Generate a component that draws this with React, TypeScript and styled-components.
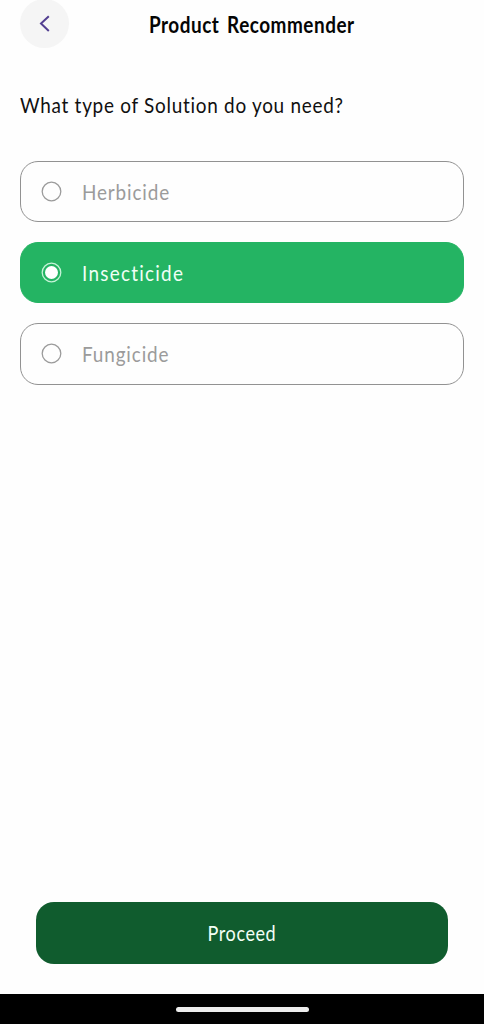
import React, { useState } from "react";
import styled, { createGlobalStyle } from "styled-components";

const GlobalStyle = createGlobalStyle`
  *, *::before, *::after { box-sizing: border-box; }
  body {
    margin: 0;
    background: #fefefe;
    font-family: Lato, "Open Sans", sans-serif;
    overflow: hidden;
  }
`;

const Screen = styled.div`
  display: flex;
  flex-direction: column;
  width: 484px;
  height: 1024px;
  background: #fefefe;
  overflow: hidden;
`;

const Header = styled.header`
  display: grid;
  grid-template-columns: 49px 1fr 49px;
  align-items: center;
  height: 49px;
  margin-top: -1px;
  padding: 0 20px;
`;

const BackButton = styled.button`
  display: flex;
  align-items: center;
  justify-content: center;
  width: 49px;
  height: 49px;
  padding: 0;
  border: 0;
  border-radius: 50%;
  background: #f5f5f5;
`;

const Label = styled.span<{ $spacing: number; $origin?: string }>`
  display: inline-block;
  letter-spacing: ${(p) => p.$spacing}px;
  white-space: nowrap;
  transform: scaleX(0.86);
  transform-origin: ${(p) => p.$origin ?? "left"} center;
`;

const Title = styled.h1`
  margin: 2px 0 0 79.5px;
  font-size: 22px;
  line-height: 28px;
  font-weight: 700;
  word-spacing: 3px;
  color: #050505;
`;

const Main = styled.main`
  display: flex;
  flex-direction: column;
  flex: 1;
  padding: 43px 20px 0;
`;

const Question = styled.h2`
  margin: 0 0 42px;
  font-size: 22px;
  line-height: 28px;
  font-weight: 400;
  color: #101010;
`;

const Options = styled.div`
  display: flex;
  flex-direction: column;
  gap: 20px;
`;

const Option = styled.button<{ $selected: boolean }>`
  display: flex;
  align-items: center;
  gap: 20px;
  height: 61.2px;
  padding: 0 20px;
  border: 1px solid ${(p) => (p.$selected ? "#24b463" : "#929292")};
  border-radius: 18px;
  background: ${(p) => (p.$selected ? "#24b463" : "transparent")};
  color: ${(p) => (p.$selected ? "#f0fff5" : "#9b9b9b")};
  font: 400 22px/28px Lato, "Open Sans", sans-serif;
`;

const Radio = styled.svg`
  width: 21px;
  height: 21px;
  flex: none;
`;

const Proceed = styled.button`
  height: 62px;
  margin: auto 16px 30px;
  border: 0;
  border-radius: 18px;
  background: #105c2e;
  color: #f3fff6;
  font: 400 21px/28px Lato, "Open Sans", sans-serif;
`;

const NavigationBar = styled.div`
  display: flex;
  align-items: center;
  justify-content: center;
  height: 30px;
  background: #000;
`;

const HomeIndicator = styled.div`
  width: 133px;
  height: 5px;
  border-radius: 3px;
  background: #ededed;
`;

const options = [
  { name: "Herbicide", spacing: 1 },
  { name: "Insecticide", spacing: 1.45 },
  { name: "Fungicide", spacing: 1 },
];

export default function App() {
  const [selected, setSelected] = useState("Insecticide");
  return (
    <Screen>
      <GlobalStyle />
      <Header>
        <BackButton aria-label="Back">
          <svg width="24" height="24" viewBox="0 0 24 24" fill="none">
            <path d="M15.8 4.2 8 11.6l7.8 7.4" stroke="#533f91" strokeWidth="2" />
          </svg>
        </BackButton>
        <Title><Label $spacing={0.6}>Product Recommender</Label></Title>
      </Header>
      <Main>
        <Question><Label $spacing={0.85}>What type of Solution do you need?</Label></Question>
        <Options role="radiogroup">
          {options.map(({ name, spacing }) => {
            const active = name === selected;
            return (
              <Option key={name} role="radio" aria-checked={active} $selected={active} onClick={() => setSelected(name)}>
                <Radio viewBox="0 0 21 21" fill="none">
                  <circle cx="10.5" cy="10.5" r="9.3" stroke={active ? "#c5f3d7" : "#9b9b9b"} strokeWidth="1.3" />
                  {active && <circle cx="10.5" cy="10.5" r="6.5" fill="#fff" />}
                </Radio>
                <Label $spacing={spacing}>{name}</Label>
              </Option>
            );
          })}
        </Options>
        <Proceed><Label $spacing={0.65} $origin="center">Proceed</Label></Proceed>
      </Main>
      <NavigationBar><HomeIndicator /></NavigationBar>
    </Screen>
  );
}
